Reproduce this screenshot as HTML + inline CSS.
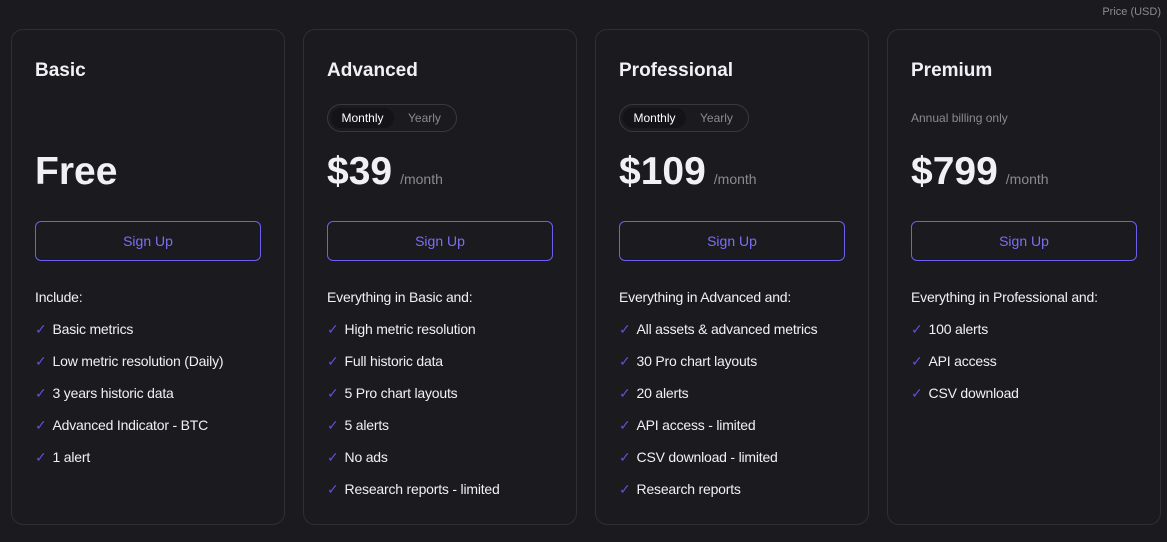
<!DOCTYPE html><html><head><style>
body{margin:0;width:1167px;height:542px;background:#1b1a1f;font-family:"Liberation Sans",sans-serif;color:#f1f1f3;position:relative;overflow:hidden}
.pu{position:absolute;right:6px;top:6px;font-size:11px;color:#8b8a92}
.card{position:absolute;top:29px;width:272px;height:494px;border:1px solid #2f2e35;border-radius:12px;background:#1b1a1f}
.t{position:absolute;left:23px;top:30px;font-size:19px;font-weight:bold}
.tg{position:absolute;left:23px;top:74px;width:128px;height:26px;border:1px solid #3a3940;border-radius:14px;font-size:12px}
.tg .m{position:absolute;left:3px;top:3px;width:63px;height:20px;border-radius:10px;background:#141317;text-align:center;line-height:20px;color:#fff}
.tg .y{position:absolute;left:80px;top:3px;line-height:20px;color:#8b8a92}
.ab{position:absolute;left:23px;top:81px;font-size:12px;color:#8b8a92}
.pr{position:absolute;left:23px;top:120px;font-size:39px;font-weight:bold;white-space:nowrap}
.pr span{font-size:14px;font-weight:normal;color:#8b8a92;margin-left:8px}
.btn{position:absolute;left:23px;top:191px;width:224px;height:38px;border:1px solid #6b5ff0;border-radius:6px;color:#7b6ff5;text-align:center;line-height:38px;font-size:14px}
.inc{position:absolute;left:23px;top:259px;font-size:14px;letter-spacing:-0.2px}
ul{position:absolute;left:23px;top:283px;margin:0;padding:0;list-style:none;font-size:14px;letter-spacing:-0.2px}
li{height:32px;line-height:32px;white-space:nowrap}
li:before{content:"✓";color:#5b50d6;margin-right:6px;font-size:14px}
</style></head><body>
<div class="pu">Price (USD)</div>
<div class="card" style="left:11px"><div class="t">Basic</div><div class="pr" style="top:120px">Free</div><div class="btn">Sign Up</div><div class="inc">Include:</div><ul><li>Basic metrics</li><li>Low metric resolution (Daily)</li><li>3 years historic data</li><li>Advanced Indicator - BTC</li><li>1 alert</li></ul></div>
<div class="card" style="left:303px"><div class="t">Advanced</div><div class="tg"><div class="m">Monthly</div><div class="y">Yearly</div></div><div class="pr">$39<span>/month</span></div><div class="btn">Sign Up</div><div class="inc">Everything in Basic and:</div><ul><li>High metric resolution</li><li>Full historic data</li><li>5 Pro chart layouts</li><li>5 alerts</li><li>No ads</li><li>Research reports - limited</li></ul></div>
<div class="card" style="left:595px"><div class="t">Professional</div><div class="tg"><div class="m">Monthly</div><div class="y">Yearly</div></div><div class="pr">$109<span>/month</span></div><div class="btn">Sign Up</div><div class="inc">Everything in Advanced and:</div><ul><li>All assets &amp; advanced metrics</li><li>30 Pro chart layouts</li><li>20 alerts</li><li>API access - limited</li><li>CSV download - limited</li><li>Research reports</li></ul></div>
<div class="card" style="left:887px"><div class="t">Premium</div><div class="ab">Annual billing only</div><div class="pr">$799<span>/month</span></div><div class="btn">Sign Up</div><div class="inc">Everything in Professional and:</div><ul><li>100 alerts</li><li>API access</li><li>CSV download</li></ul></div>
</body></html>
